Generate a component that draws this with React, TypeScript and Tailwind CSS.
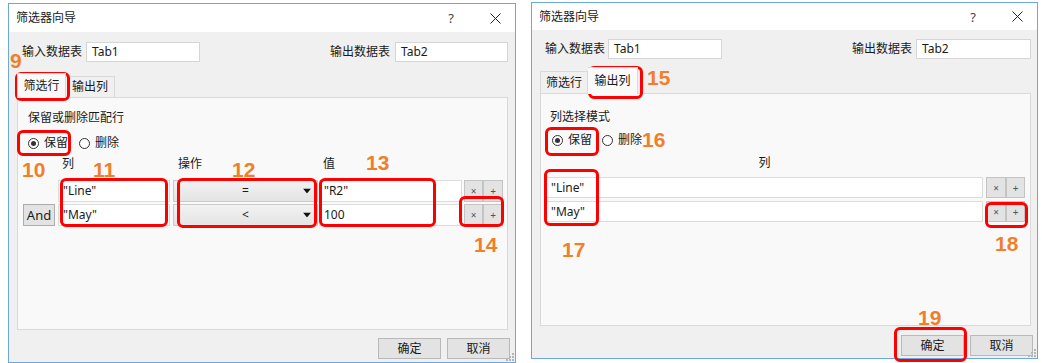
import React from 'react';

const boxes = [
  'left-[15px] top-[72px] w-[55px] h-[29px]',
  'left-[17px] top-[130px] w-[54px] h-[26px]',
  'left-[60px] top-[178px] w-[108px] h-[49px]',
  'left-[177px] top-[178px] w-[140px] h-[50px]',
  'left-[319px] top-[178px] w-[117px] h-[49px]',
  'left-[459px] top-[196px] w-[45px] h-[31px]',
  'left-[588px] top-[66px] w-[55px] h-[33px]',
  'left-[545px] top-[127px] w-[54px] h-[29px]',
  'left-[544px] top-[169px] w-[55px] h-[57px]',
  'left-[985px] top-[202px] w-[43px] h-[26px]',
  'left-[894px] top-[327px] w-[73px] h-[35px]',
];

const numbers = [
  { n: '9', pos: 'left-[10px] top-[50px]' },
  { n: '10', pos: 'left-[22px] top-[159px]' },
  { n: '11', pos: 'left-[93px] top-[159px]' },
  { n: '12', pos: 'left-[232px] top-[159px]' },
  { n: '13', pos: 'left-[366px] top-[152px]' },
  { n: '14', pos: 'left-[474px] top-[234px]' },
  { n: '15', pos: 'left-[647px] top-[67px]' },
  { n: '16', pos: 'left-[642px] top-[129px]' },
  { n: '17', pos: 'left-[562px] top-[239px]' },
  { n: '18', pos: 'left-[995px] top-[233px]' },
  { n: '19', pos: 'left-[918px] top-[307px]' },
];

const TitleBar = ({ className }: { className: string }) => (
  <div className={`bg-white flex items-center ${className}`}>
    <span>筛选器向导</span>
    <span className="ml-auto text-[13px] text-[#444]">?</span>
    <svg className="ml-[36px]" width="11" height="11" viewBox="0 0 11 11">
      <path d="M0.5 0.5 L10.5 10.5 M10.5 0.5 L0.5 10.5" stroke="#222" strokeWidth="1" />
    </svg>
  </div>
);

const Field = ({ w, children }: { w: string; children?: React.ReactNode }) => (
  <div className={`${w} h-[20px] bg-white border border-[#d6d6d6] px-[5px] flex items-center`}>{children}</div>
);

const Radio = ({ checked, label }: { checked?: boolean; label: string }) => (
  <div className="flex items-center">
    <span className="w-[11px] h-[11px] rounded-full border border-[#333] bg-white flex items-center justify-center">
      {checked && <span className="w-[5px] h-[5px] rounded-full bg-[#333]" />}
    </span>
    <span className="ml-[5px]">{label}</span>
  </div>
);

const SmallBtn = ({ w, children }: { w: string; children: React.ReactNode }) => (
  <div className={`${w} h-full bg-[#e3e3e3] border border-[#c4c4c4] flex items-center justify-center text-[10px] text-[#555]`}>
    {children}
  </div>
);

const Combo = ({ value }: { value: string }) => (
  <div className="relative w-[145px] h-full bg-linear-to-b from-[#f2f2f2] to-[#e4e4e4] border border-[#cacaca] flex items-center justify-center">
    <span>{value}</span>
    <svg className="absolute right-[6px] top-1/2 -translate-y-1/2" width="8" height="5" viewBox="0 0 8 5">
      <path d="M0 0 H8 L4 5 Z" fill="#111" />
    </svg>
  </div>
);

const FooterButtons = ({ className }: { className: string }) => (
  <div className={`flex justify-end gap-[6px] h-[21px] ${className}`}>
    <div className="w-[63px] h-full bg-[#e3e3e3] border border-[#b9b9b9] flex items-center justify-center">确定</div>
    <div className="w-[63px] h-full bg-[#e3e3e3] border border-[#b9b9b9] flex items-center justify-center">取消</div>
  </div>
);

const Grip = () => (
  <svg className="absolute right-[1px] bottom-[1px]" width="8" height="8" viewBox="0 0 8 8">
    <rect x="6" y="0" width="2" height="2" fill="#b5b5b5" />
    <rect x="3" y="3" width="2" height="2" fill="#b5b5b5" />
    <rect x="6" y="3" width="2" height="2" fill="#b5b5b5" />
    <rect x="0" y="6" width="2" height="2" fill="#b5b5b5" />
    <rect x="3" y="6" width="2" height="2" fill="#b5b5b5" />
    <rect x="6" y="6" width="2" height="2" fill="#b5b5b5" />
  </svg>
);

export default function App() {
  return (
    <div className="relative w-[1042px] h-[363px] overflow-hidden bg-white text-[12px] leading-[16px] text-[#1a1a1a] font-['Segoe_UI','Noto_Sans','Noto_Sans_CJK_SC',sans-serif]">
      <div className="flex items-start pl-[8px] gap-[15px]">
        {/* left dialog: 筛选行 tab */}
        <div className="relative mt-[3px] w-[508px] h-[360px] border border-[#6ba8e0] bg-[#f0f0f0] flex flex-col">
          <TitleBar className="h-[28px] pl-[7px] pr-[14px]" />
          <div className="mt-[10px] flex items-center pl-[13px] pr-[7px]">
            <span>输入数据表</span>
            <div className="ml-[4px]"><Field w="w-[114px]">Tab1</Field></div>
            <span className="ml-auto">输出数据表</span>
            <div className="ml-[5px]"><Field w="w-[113px]">Tab2</Field></div>
          </div>
          <div className="mt-[11px] ml-[8px] flex items-end h-[24px]">
            <div className="relative z-10 -mb-px w-[49px] h-[25px] bg-[#f9f9f9] border border-b-0 border-[#d9d9d9] flex items-center justify-center">筛选行</div>
            <div className="w-[49px] h-[21px] bg-[#f0f0f0] border border-l-0 border-b-0 border-[#d9d9d9] flex items-center justify-center">输出列</div>
          </div>
          <div className="ml-[8px] mr-[7px] h-[233px] border border-[#d9d9d9] bg-[#f9f9f9] flex flex-col">
            <div className="mt-[12px] ml-[10px]">保留或删除匹配行</div>
            <div className="mt-[9px] ml-[10px] flex items-center gap-[11px]">
              <Radio checked label="保留" />
              <Radio label="删除" />
            </div>
            <div className="mt-[5px] ml-[5px] flex">
              <div className="w-[32px]" />
              <div className="ml-[3px] w-[112px] pl-[4px]">列</div>
              <div className="ml-[3px] w-[145px] pl-[5px]">操作</div>
              <div className="ml-[1px] w-[143px] pl-[4px]">值</div>
            </div>
            <div className="mt-[8px] ml-[5px] flex h-[22px]">
              <div className="w-[32px]" />
              <div className="ml-[3px] w-[112px] bg-white border border-[#dcdcdc] px-[4px] flex items-center">"Line"</div>
              <div className="ml-[3px]"><Combo value="=" /></div>
              <div className="ml-[1px] w-[143px] bg-white border border-[#dcdcdc] px-[4px] flex items-center">"R2"</div>
              <div className="ml-[2px] flex">
                <SmallBtn w="w-[19px]">×</SmallBtn>
                <SmallBtn w="w-[20px]">+</SmallBtn>
              </div>
            </div>
            <div className="mt-[2px] ml-[5px] flex h-[22px]">
              <div className="w-[32px] bg-[#e3e3e3] border border-[#adadad] flex items-center justify-center text-[13px]">And</div>
              <div className="ml-[3px] w-[112px] bg-white border border-[#dcdcdc] px-[4px] flex items-center">"May"</div>
              <div className="ml-[3px]"><Combo value="<" /></div>
              <div className="ml-[1px] w-[143px] bg-white border border-[#dcdcdc] px-[4px] flex items-center">100</div>
              <div className="ml-[2px] flex">
                <SmallBtn w="w-[19px]">×</SmallBtn>
                <SmallBtn w="w-[20px]">+</SmallBtn>
              </div>
            </div>
          </div>
          <FooterButtons className="mt-[8px] pr-[5px]" />
          <Grip />
        </div>

        {/* right dialog: 输出列 tab */}
        <div className="relative mt-[2px] w-[507px] h-[357px] border border-[#6ba8e0] bg-[#f0f0f0] flex flex-col">
          <TitleBar className="h-[27px] pl-[7px] pr-[14px]" />
          <div className="mt-[9px] flex items-center pl-[13px] pr-[6px]">
            <span>输入数据表</span>
            <div className="ml-[3px]"><Field w="w-[114px]">Tab1</Field></div>
            <span className="ml-auto">输出数据表</span>
            <div className="ml-[4px]"><Field w="w-[115px]">Tab2</Field></div>
          </div>
          <div className="mt-[8px] ml-[8px] flex items-end h-[26px]">
            <div className="w-[48px] h-[22px] bg-[#f0f0f0] border border-b-0 border-[#d9d9d9] flex items-center justify-center">筛选行</div>
            <div className="relative z-10 -mb-px w-[50px] h-[27px] bg-[#f9f9f9] border border-l-0 border-b-0 border-[#d9d9d9] flex items-center justify-center">输出列</div>
          </div>
          <div className="ml-[8px] mr-[6px] h-[233px] border border-[#d9d9d9] bg-[#f9f9f9] flex flex-col">
            <div className="mt-[15px] ml-[9px]">列选择模式</div>
            <div className="mt-[7px] ml-[11px] flex items-center gap-[10px]">
              <Radio checked label="保留" />
              <Radio label="删除" />
            </div>
            <div className="mt-[7px] ml-[5px] w-[437px] text-center">列</div>
            <div className="mt-[6px] ml-[5px] flex h-[21px]">
              <div className="w-[437px] bg-white border border-[#dcdcdc] px-[4px] flex items-center">"Line"</div>
              <div className="ml-[3px] flex">
                <SmallBtn w="w-[20px]">×</SmallBtn>
                <SmallBtn w="w-[19px]">+</SmallBtn>
              </div>
            </div>
            <div className="mt-[3px] ml-[5px] flex h-[21px]">
              <div className="w-[437px] bg-white border border-[#dcdcdc] px-[4px] flex items-center">"May"</div>
              <div className="ml-[3px] flex">
                <SmallBtn w="w-[20px]">×</SmallBtn>
                <SmallBtn w="w-[19px]">+</SmallBtn>
              </div>
            </div>
          </div>
          <FooterButtons className="mt-[9px] pr-[4px]" />
          <Grip />
        </div>
      </div>

      {/* annotations */}
      {boxes.map((b) => (
        <div key={b} className={`absolute ${b} border-[3px] border-[#ff0000] rounded-[6px]`} />
      ))}
      {numbers.map((x) => (
        <div key={x.n} className={`absolute ${x.pos} text-[21px] leading-[21px] font-bold text-[#f07f2b] font-['Liberation_Sans',sans-serif]`}>
          {x.n}
        </div>
      ))}
    </div>
  );
}
